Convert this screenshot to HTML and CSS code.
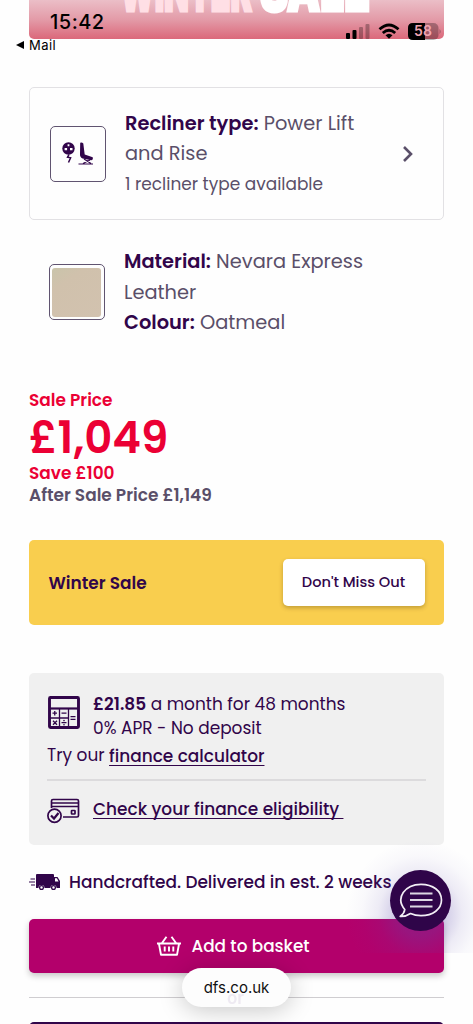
FILE: index.html
```html
<!DOCTYPE html>
<html lang="en">
<head>
<meta charset="utf-8">
<meta name="viewport" content="width=device-width, initial-scale=1">
<title>dfs.co.uk</title>
<link rel="stylesheet" href="styles.css">
</head>
<body>
<div class="screen">
  <header class="hero">
    <svg class="hero-title" width="415" height="39" viewBox="0 0 415 39">
      <text class="hero-winter" x="91" y="11" textLength="132" lengthAdjust="spacingAndGlyphs">WINTER</text>
      <text class="hero-sale" x="231" y="11" textLength="110" lengthAdjust="spacingAndGlyphs">SALE</text>
    </svg>
  </header>

  <div class="status">
    <span class="clock">15:42</span>
    <svg class="signals" width="96" height="18" viewBox="0 0 96 18">
      <rect x="0" y="10" width="4" height="6" rx="1"/>
      <rect x="6.500" y="7" width="4" height="9" rx="1"/>
      <rect class="dim" x="13" y="4" width="4" height="12" rx="1"/>
      <rect class="dim" x="19.500" y="1" width="4" height="15" rx="1"/>
      <path class="wifi" d="M33.500 6.300Q43-2.200 52.500 6.300M36.800 10Q43 4.600 49.200 10"/>
      <path d="M39.500 12.200Q43 9.200 46.500 12.200L43 15.800Z"/>
      <rect class="dim" x="62" y="0" width="30.500" height="17" rx="5"/>
      <path d="M67 0H79V17H67Q62 17 62 12V5Q62 0 67 0Z"/>
      <path class="dim" d="M93.500 6Q96 8.500 93.500 11Z"/>
      <text class="battery" x="68" y="13.300" textLength="18">58</text>
    </svg>
    <div class="back">
      <svg width="9" height="8" viewBox="0 0 9 8"><path d="M0 4 8 0V8Z"/></svg>
      <span>Mail</span>
    </div>
  </div>

  <main>
    <section class="option card">
      <div class="thumb">
        <svg width="32" height="24" viewBox="0 0 32 24">
          <circle cx="6.500" cy="6.500" r="6.200"/>
          <path class="holes" d="M5.600 2.200h1.800v2H5.600zM2.600 6h2.500v2.200H2.600zM8 6h2.500v2.200H8z"/>
          <path class="bolt" d="M7 12.500 5.500 15.300 8.600 15.800 6.500 20.500"/>
          <path d="M18.200.8Q20 .2 21.300 1.400L22.700 12.500 30.700 15.200Q31.500 17.600 29.100 18.300L20.600 16.600Q17.600 14.900 18 12Z"/>
          <path class="legs" d="M22 17 29 21.500M28 18 21 21.500M16.500 22H31"/>
        </svg>
      </div>
      <div class="option-text">
        <div><b>Recliner type:</b> Power Lift</div>
        <div>and Rise</div>
        <div class="small">1 recliner type available</div>
      </div>
      <svg class="chevron" width="12" height="18" viewBox="0 0 12 18"><path d="M2 2 9 9 2 16"/></svg>
    </section>

    <section class="option material">
      <div class="thumb"><div class="swatch"></div></div>
      <div class="option-text">
        <div><b>Material:</b> Nevara Express</div>
        <div>Leather</div>
        <div><b>Colour:</b> Oatmeal</div>
      </div>
    </section>

    <section class="price">
      <div>Sale Price</div>
      <div class="price-now">£1,049</div>
      <div>Save £100</div>
      <div class="price-after">After Sale Price £1,149</div>
    </section>

    <section class="banner">
      <span class="banner-title">Winter Sale</span>
      <a class="banner-button">Don't Miss Out</a>
    </section>

    <section class="finance">
      <div class="finance-row">
        <svg width="32" height="33" viewBox="0 0 32 33">
          <rect class="frame" x="1.500" y="1.500" width="29" height="30" rx="1"/>
          <path class="line2" d="M1 12.500H31"/>
          <path class="line1" d="M11.500 13V31M20.500 13V31M2 22H20.500M4.500 17.200H9M6.750 15V19.500M13.500 17.200H18.500M22.500 20.700H27.500M22.500 23.300H27.500M5 24.700 9 28.700M9 24.700 5 28.700M13.500 26.700H18.500"/>
          <circle cx="16" cy="24.600" r=".8"/><circle cx="16" cy="28.800" r=".8"/>
        </svg>
        <div class="finance-text">
          <div><b>£21.85</b> a month for 48 months</div>
          <div>0% APR - No deposit</div>
        </div>
      </div>
      <div class="finance-try">Try our <a class="link calc">finance calculator</a></div>
      <div class="finance-check">
        <svg width="33" height="26" viewBox="0 0 33 26">
          <path class="line15" d="M4.500 10V3Q4.500 1.500 6 1.500H30Q31.500 1.500 31.500 3V17.500Q31.500 19 30 19H16M4.500 5H31.500M4.500 8.500H31.500"/>
          <rect class="line15" x="24.500" y="12.500" width="3.500" height="3.500" rx=".5"/>
          <circle class="tick" cx="7.500" cy="17.800" r="6.600"/>
          <path class="line2" d="M4 17.500 7 20.500 11.500 15"/>
        </svg>
        <a class="link">Check your finance eligibility&nbsp;</a>
      </div>
    </section>

    <div class="delivery">
      <svg width="31" height="17" viewBox="0 0 31 17">
        <path d="M8 0H24Q25 0 25 1V3H28.500L31 7V14H27.500A3 3 0 0 0 21.500 14H15.500A3 3 0 0 0 9.500 14H7V1Q7 0 8 0Z"/>
        <path class="window" d="M26 4.300H27.900L29.600 7.500H26Z"/>
        <circle class="wheel" cx="12.500" cy="13.500" r="1.900"/><circle class="wheel" cx="24.500" cy="13.500" r="1.900"/>
        <path class="speed" d="M1.500 5H6M0 8H6M2 11H6"/>
      </svg>
      <span>Handcrafted. Delivered in est. 2 weeks</span>
    </div>

    <a class="basket">
      <svg width="24" height="20" viewBox="0 0 24 20"><path d="M0 7.500H24M2 8 4 18.800H20L22 8M5 7 9.500.8M19 7 14.500.8M7.700 10.500V15.500M12 10.500V15.500M16.300 10.500V15.500"/></svg>
      <span>Add to basket</span>
    </a>
    <hr>
    <div class="next-button"></div>
  </main>

  <div class="address"><span class="ghost">or</span><span class="domain">dfs.co.uk</span></div>
  <div class="glow"></div>
  <div class="chat">
    <svg width="44" height="36" viewBox="0 0 44 36">
      <path d="M5.800 26.500C-4 15 6 1.300 22 1.300C34 1.300 42.500 8 42.500 17C42.500 26 34 32.700 22 32.700C18 32.700 14.500 31.900 11.500 30.500C8.500 32.600 5 33.600 1.200 33.400C4 31.300 5.500 29 5.800 26.500Z"/>
      <path class="bars" d="M11 10.500H33.500M11 17H33.500M11 23.500H33.500"/>
    </svg>
  </div>
</div>
</body>
</html>
```
FILE: styles.css
```css
* { box-sizing: border-box; }
body {
  margin: 0;
  background: #fefefe;
  font-family: Poppins, Inter, sans-serif;
  color: #31054a;
  white-space: nowrap;
}
.screen { position: relative; width: 473px; height: 1024px; overflow: hidden; }
svg { display: block; flex: none; }
b { font-weight: 600; color: #31054a; }

.hero {
  height: 39px;
  margin: 0 29px;
  border-radius: 0 0 5px 5px;
  overflow: hidden;
  background: linear-gradient(#ebbec7, #e39ba8 50%, #db687a);
}
.hero-winter, .hero-sale { font: 900 60px Inter, sans-serif; fill: #ffdfe5; }
.hero-winter { stroke: #ffdfe5; stroke-width: 3; }
.hero-sale { fill: #fff; stroke: #fff; stroke-width: 3; }

.status { position: absolute; inset: 0 0 auto 0; height: 56px; font-family: Inter, sans-serif; color: #000; }
.clock { position: absolute; left: 50px; top: 9px; font-size: 20px; line-height: 26px; font-weight: 500; letter-spacing: .5px; }
.signals { position: absolute; left: 346px; top: 23px; }
.signals .dim { fill: #000; opacity: .28; }
.wifi { fill: none; stroke: #000; stroke-width: 2.8; }
.battery { font: 600 14px Inter, sans-serif; fill: #f0a5b1; }
.back { position: absolute; left: 16px; top: 37px; display: flex; align-items: center; gap: 4px; font-size: 13px; line-height: 16px; letter-spacing: .45px; }

main { padding: 48px 29px 0; }
.option { display: flex; align-items: center; padding-left: 20px; color: #5a4f69; font-size: 19.4px; line-height: 30.4px; }
.card { height: 133px; border: 1px solid #e2e1e4; border-radius: 5px; padding-left: 19.500px; }
.thumb { width: 56px; height: 56px; flex: none; border: 1px solid #605470; border-radius: 5px; display: flex; align-items: center; justify-content: center; }
.thumb svg { fill: #31054a; }
.thumb .holes { fill: #fff; }
.thumb .bolt, .thumb .legs { fill: none; stroke: #31054a; stroke-width: 1.5; }
.thumb .legs { stroke-width: 1.1; }
.option-text { margin-left: 19.500px; padding-top: 1px; }
.small { font-size: 16.95px; line-height: 30px; }
.chevron { margin-left: auto; margin-right: 29.500px; }
.chevron path { fill: none; stroke: #5a4f69; stroke-width: 2.6; }
.material { height: 90px; margin-top: 27px; padding-left: 19.500px; }
.material .option-text { padding-top: 2px; }
.swatch { width: 49px; height: 49px; border-radius: 3px; background: linear-gradient(145deg, #c9c4aa, #d0c1ac 28%, #d2c2af); }

.price { margin-top: 52px; font-size: 16.95px; line-height: 22px; font-weight: 600; color: #eb0034; }
.price-now { font-size: 43.5px; line-height: 51px; padding-top: 1px; height: 51px; }
.price-after { color: #5a4f69; }

.banner { margin-top: 34px; height: 85px; padding: 0 19.500px 0 19.500px; border-radius: 5px; background: #f9ce4e; display: flex; align-items: center; justify-content: space-between; }
.banner-title { font-size: 16.95px; font-weight: 600; }
.banner-button { width: 142px; height: 47px; border-radius: 5px; background: #fff; box-shadow: 0 2px 4px rgba(70, 45, 0, .3); display: flex; align-items: center; justify-content: center; font-size: 14.6px; font-weight: 500; }

.finance { margin-top: 48px; height: 172px; padding: 19px 18px 0 18px; border-radius: 5px; background: #f0f0f0; font-size: 16.95px; }
.finance svg { fill: #31054a; }
.finance .line1, .finance .line15, .finance .line2, .finance .frame { fill: none; stroke: #31054a; stroke-width: 1.3; }
.finance .line15 { stroke-width: 1.7; }
.finance .line2 { stroke-width: 2.2; }
.finance .frame { stroke-width: 2.9; }
.finance .tick { fill: #f0f0f0; stroke: #31054a; stroke-width: 1.7; }
.finance-row { display: flex; padding-left: 1px; gap: 13px; }
.finance-row svg { margin-top: 4px; }
.finance-text { line-height: 24px; }
.finance-try { height: 41px; padding-top: 3px; line-height: 24px; border-bottom: 2px solid #dcdbdd; }
.link { font-weight: 500; text-decoration: underline; text-decoration-thickness: 1.3px; text-underline-offset: 3px; text-decoration-skip-ink: none; }
.calc { position: relative; top: 1px; }
.finance-check { display: flex; align-items: center; height: 56px; gap: 13px; }
.finance-check svg { margin-top: 3px; }

.delivery { display: flex; align-items: center; gap: 9px; height: 74px; font-size: 16.95px; font-weight: 500; }
.delivery svg { fill: #31054a; }
.delivery .window { fill: #fff; }
.delivery .wheel { fill: #fff; stroke: #31054a; stroke-width: 1.3; }
.delivery .speed { stroke: #31054a; stroke-width: 1.1; }

.basket { display: flex; align-items: center; justify-content: center; gap: 10px; height: 54px; padding-right: 6px; border-radius: 5px; background: #b3006b; color: #fff; box-shadow: 0 3px 6px rgba(0, 0, 0, .22); font-size: 16.85px; font-weight: 500; }
.basket path { fill: none; stroke: #fff; stroke-width: 1.9; stroke-linejoin: round; }
hr { height: 1px; margin: 24px 0; border: 0; background: #cfcdd0; }
.next-button { height: 54px; border-radius: 5px; background: #31054a; }

.address { position: absolute; left: 182px; top: 968px; width: 109px; height: 39px; border-radius: 20px; background: #fdfdfd; box-shadow: 0 3px 24px rgba(0, 0, 0, .22); display: flex; align-items: center; justify-content: center; font: 400 15px Inter, sans-serif; color: #111; }
.domain { position: relative; }
.ghost { position: absolute; left: 45px; top: 20px; font-size: 17px; font-weight: 600; color: #eeeaf2; filter: blur(.7px); }
.glow { position: absolute; right: 0; top: 840px; width: 140px; height: 113px; background: radial-gradient(circle at 87px 74px, rgba(90, 70, 170, .3) 22px, rgba(90, 70, 170, .1) 42px, rgba(90, 70, 170, .03) 58px, rgba(90, 70, 170, 0) 74px); }
.chat { position: absolute; left: 390px; top: 870px; width: 61px; height: 61px; border-radius: 50%; background: #2f0549; display: flex; align-items: center; justify-content: center; }
.chat path { fill: none; stroke: #f2eef5; stroke-width: 1.7; stroke-linejoin: round; }
.chat .bars { stroke: #dcd7e2; stroke-width: 2.2; }
```
